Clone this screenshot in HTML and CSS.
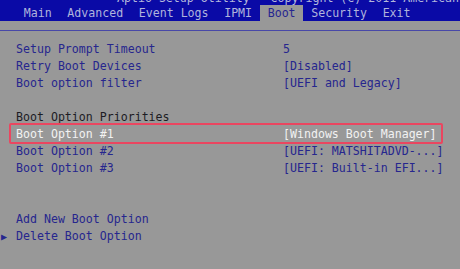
FILE: index.html
```html
<!DOCTYPE html>
<html>
<head>
<meta charset="utf-8">
<link rel="stylesheet" href="styles.css">
</head>
<body>
<div class="header">
  <div class="title"><div class="title-text">Aptio Setup Utility - Copyright (C) 2011 American Megatrends, Inc.</div></div>
  <div class="tabs">
    <span class="tab">Main</span>
    <span class="tab">Advanced</span>
    <span class="tab">Event Logs</span>
    <span class="tab">IPMI</span>
    <span class="tab active">Boot</span>
    <span class="tab">Security</span>
    <span class="tab">Exit</span>
  </div>
</div>
<div class="divider"></div>
<div class="content">
  <div class="row"><span class="label">Setup Prompt Timeout</span><span class="value">5</span></div>
  <div class="row"><span class="label">Retry Boot Devices</span><span class="value">[Disabled]</span></div>
  <div class="row"><span class="label">Boot option filter</span><span class="value">[UEFI and Legacy]</span></div>
  <div class="row blank"></div>
  <div class="row heading"><span class="label">Boot Option Priorities</span></div>
  <div class="row selected"><span class="label">Boot Option #1</span><span class="value">[Windows Boot Manager]</span><span class="highlight"></span></div>
  <div class="row"><span class="label">Boot Option #2</span><span class="value">[UEFI: MATSHITADVD-...]</span></div>
  <div class="row"><span class="label">Boot Option #3</span><span class="value">[UEFI: Built-in EFI...]</span></div>
  <div class="row blank"></div>
  <div class="row blank"></div>
  <div class="row"><span class="label">Add New Boot Option</span></div>
  <div class="row submenu"><span class="arrow">&#9654;</span><span class="label">Delete Boot Option</span></div>
</div>
</body>
</html>
```

FILE: styles.css
```css
html, body {
  margin: 0;
  padding: 0;
}
body {
  background: #989898;
  font-family: "DejaVu Sans Mono", "Liberation Mono", monospace;
  font-size: 11.6px;
  width: 460px;
  height: 269px;
  overflow: hidden;
}
.header {
  background: #0a0aa6;
  height: 21px;
}
.title {
  height: 5px;
  overflow: hidden;
  padding-left: 117px;
}
.title-text {
  line-height: 16px;
  margin-top: -10px;
  color: #b4b8dc;
  white-space: nowrap;
}
.tabs {
  display: flex;
  height: 16px;
  padding-left: 16px;
}
.tab {
  padding: 0 7.8px;
  line-height: 16px;
  color: #b0b4dc;
  white-space: nowrap;
}
.tab.active {
  background: #989898;
  color: #262690;
}
.divider {
  margin-top: 9px;
  height: 1px;
  background: #4848a8;
}
.content {
  padding-top: 10px;
}
.row {
  position: relative;
  display: flex;
  height: 17px;
  line-height: 17px;
  padding-left: 16px;
  color: #26268e;
  white-space: nowrap;
}
.label {
  width: 267px;
  flex: none;
}
.heading {
  color: #1c1c24;
}
.selected {
  color: #f2f2f2;
}
.highlight {
  position: absolute;
  left: 9px;
  top: -3px;
  width: 430px;
  height: 17px;
  border: 2px solid #ea4660;
  border-radius: 2px;
}
.submenu {
  padding-left: 1px;
}
.arrow {
  width: 15px;
  font-size: 10px;
  color: #26268e;
}
```
